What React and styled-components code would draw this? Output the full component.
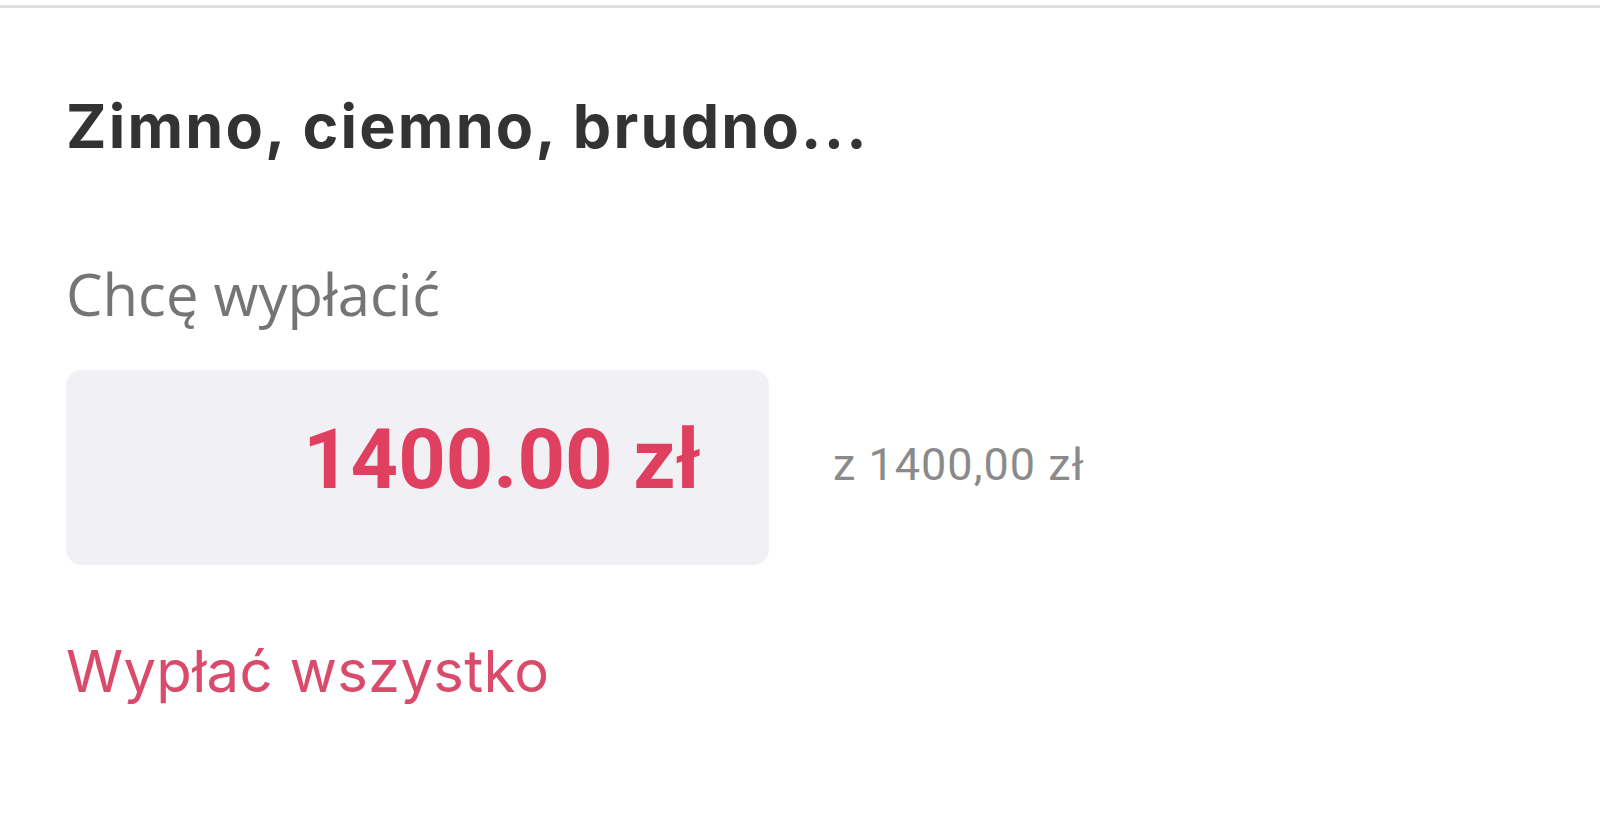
import styled, { createGlobalStyle } from "styled-components";

const GlobalStyle = createGlobalStyle`
  html, body {
    margin: 0;
    padding: 0;
    background: #ffffff;
  }
  body {
    font-family: "Inter", "Noto Sans", sans-serif;
  }
`;

const Page = styled.div`
  min-height: 100vh;
  padding-top: 5px;
  box-sizing: border-box;
  background: #ffffff;
`;

const Divider = styled.div`
  height: 3px;
  background: #e0e0e0;
`;

const Content = styled.div`
  display: flex;
  flex-direction: column;
  align-items: flex-start;
  padding: 82px 66px 0;
`;

const Title = styled.h1`
  margin: 0;
  font-family: "Inter", sans-serif;
  font-weight: 700;
  font-size: 61px;
  line-height: 72px;
  letter-spacing: 2.2px;
  color: #333333;
`;

const Label = styled.div`
  margin-top: 98px;
  font-family: "Open Sans", sans-serif;
  font-size: 58px;
  line-height: 68px;
  color: #757575;
`;

const AmountRow = styled.div`
  display: flex;
  align-items: center;
  gap: 64px;
  margin-top: 42px;
`;

const AmountBox = styled.div`
  display: flex;
  align-items: center;
  justify-content: flex-end;
  width: 703px;
  height: 195px;
  box-sizing: border-box;
  padding-right: 68px;
  background: #f0f0f5;
  border-radius: 16px;
`;

const Amount = styled.span`
  font-family: "Roboto", sans-serif;
  font-weight: 700;
  font-size: 83px;
  color: #e0405f;
  margin-top: -16px;
`;

const Limit = styled.span`
  font-family: "Roboto", sans-serif;
  font-size: 45px;
  letter-spacing: 1px;
  color: #8a8a8a;
  margin-top: -6px;
`;

const WithdrawAll = styled.button`
  margin-top: 72px;
  padding: 0;
  border: none;
  background: none;
  font-family: "Inter", sans-serif;
  font-size: 58px;
  line-height: 68px;
  letter-spacing: 0.3px;
  color: #d94a6b;
  cursor: pointer;
`;

export default function App() {
  return (
    <>
      <GlobalStyle />
      <Page>
        <Divider />
        <Content>
          <Title>Zimno, ciemno, brudno...</Title>
          <Label>Chcę wypłacić</Label>
          <AmountRow>
            <AmountBox>
              <Amount>1400.00 zł</Amount>
            </AmountBox>
            <Limit>z 1400,00 zł</Limit>
          </AmountRow>
          <WithdrawAll>Wypłać wszystko</WithdrawAll>
        </Content>
      </Page>
    </>
  );
}
